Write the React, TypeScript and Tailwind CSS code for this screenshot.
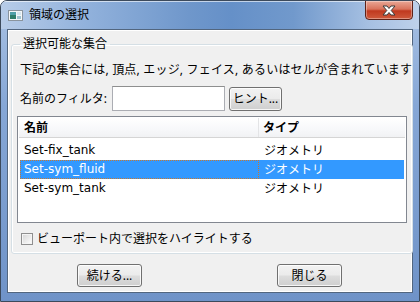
const FONT = { fontFamily: '"Noto Sans", "Noto Sans CJK JP", sans-serif' };
const LATIN = { fontFamily: '"DejaVu Sans", "Noto Sans CJK JP", sans-serif' };

const ROWS = [
  { name: 'Set-fix_tank', type: 'ジオメトリ' },
  { name: 'Set-sym_fluid', type: 'ジオメトリ' },
  { name: 'Set-sym_tank', type: 'ジオメトリ' },
];

function AppIcon() {
  return (
    <svg width="15" height="11" viewBox="0 0 15 11">
      <rect x="0.5" y="0.5" width="14" height="10" fill="#f4f6f8" stroke="#8a949e" />
      <rect x="2" y="2" width="6" height="7" fill="#2f7d6a" />
      <rect x="2" y="2" width="6" height="3" fill="#4f9fa8" />
      <rect x="9" y="2" width="4" height="3" fill="#d6e6ee" />
      <rect x="9" y="6" width="4" height="3" fill="#9fc3cf" />
    </svg>
  );
}

function CloseButton() {
  return (
    <div className="absolute right-[6px] top-[-1px] flex h-[20px] w-[48px] items-center justify-center rounded-b-[4px] border border-[#5e2218] bg-[linear-gradient(180deg,#e9a796_0%,#d8735c_45%,#c0391f_55%,#cf5a3c_100%)] shadow-[inset_0_0_0_1px_rgba(255,255,255,0.35)]">
      <svg width="14" height="11" viewBox="0 0 14 11">
        <path d="M1 1 H5 L7 3.5 L9 1 H13 L9.2 5.5 L13 10 H9 L7 7.5 L5 10 H1 L4.8 5.5 Z" fill="#ffffff" stroke="#3b3b3b" strokeWidth="1" strokeLinejoin="round" />
      </svg>
    </div>
  );
}

function WinButton({ label, className }: { label: string; className: string }) {
  return (
    <button
      className={`flex items-center justify-center rounded-[3px] border border-[#707070] bg-[linear-gradient(180deg,#f2f2f2_0%,#ebebeb_48%,#dddddd_52%,#cfcfcf_100%)] text-[12px] text-black shadow-[inset_0_0_0_1px_rgba(255,255,255,0.8)] ${className}`}
    >
      {label}
    </button>
  );
}

export default function App() {
  return (
    <div className="h-[302px] w-[420px] bg-white" style={FONT}>
      <div className="relative flex h-[302px] w-[420px] flex-col overflow-hidden rounded-t-[7px] border border-[#3c4a5c] bg-[linear-gradient(180deg,#a9c2e4_0%,#86a7d6_35%,#6f93c8_100%)] shadow-[inset_0_1px_0_rgba(255,255,255,0.7)]">
        <div className="flex h-[28px] items-center bg-[linear-gradient(90deg,#b7cce8_0%,#92b2dc_20%,#6f97cb_45%,#6590c8_55%,#7199cc_70%,#a6c0e2_88%,#bed1ea_100%)] pl-[7px] shadow-[inset_0_1px_0_rgba(255,255,255,0.6)]">
          <AppIcon />
          <span className="ml-[6px] text-[12px] text-black">領域の選択</span>
        </div>
        <CloseButton />

        <div className="mx-[6px] flex h-[264px] flex-col border border-[#52667f] bg-[#f0f0f0] shadow-[inset_0_0_0_1px_#ffffff]">
          <fieldset className="mx-[3px] mt-[6px] rounded-[3px] border border-[#d5dfe5] px-[5px] pb-[6px] shadow-[inset_0_0_0_1px_#ffffff]">
            <legend className="ml-[3px] px-[3px] text-[12px] leading-[16px] text-black">選択可能な集合</legend>

            <div className="-mr-[5px] mt-[10px] overflow-hidden whitespace-nowrap pl-[3px] text-[12px] leading-[16px] tracking-[0.2px] text-black">
              下記の集合には, 頂点, エッジ, フェイス, あるいはセルが含まれています
            </div>

            <div className="mt-[8px] flex h-[25px] items-center pl-[3px]">
              <span className="text-[12px] leading-[16px] text-black">名前のフィルタ:</span>
              <div className="ml-[5px] h-[25px] w-[113px] border border-[#abadb3] border-t-[#8e8f8f] bg-white" />
              <WinButton label="ヒント..." className="ml-[4px] h-[24px] w-[53px]" />
            </div>

            <div className="mt-[5px] flex h-[107px] flex-col border border-[#828790] bg-white p-[1px]">
              <div className="flex h-[20px] border-b border-[#d5d5d5] bg-[linear-gradient(180deg,#ffffff_0%,#f7f8fa_60%,#f1f2f4_100%)] text-[12px] font-bold leading-[16px] text-black">
                <div className="flex w-[240px] items-center border-r border-[#e3e4e6] pl-[5px]">名前</div>
                <div className="flex flex-1 items-center pl-[4px]">タイプ</div>
              </div>
              <div className="mt-[3px] flex flex-col">
                {ROWS.map((r, i) => {
                  const sel = i === 1;
                  return (
                    <div
                      key={r.name}
                      className={`mx-[1px] flex h-[19px] text-[12px] leading-[17px] ${sel ? 'bg-[#3399ff] text-white' : 'text-black'}`}
                    >
                      <div
                        className={`w-[239px] border pl-[3px] ${sel ? 'border-dotted border-[#c9782e]' : 'border-transparent'}`}
                        style={LATIN}
                      >
                        {r.name}
                      </div>
                      <div className="flex-1 border border-transparent pl-[4px]">{r.type}</div>
                    </div>
                  );
                })}
              </div>
            </div>

            <div className="mt-[8px] flex h-[16px] items-center pl-[4px]">
              <div className="h-[12px] w-[12px] border border-[#8f8f8f] bg-[linear-gradient(135deg,#d4d4d4_0%,#f2f2f2_70%,#ffffff_100%)] shadow-[inset_0_0_0_1px_#f4f4f4]" />
              <span className="ml-[4px] text-[12px] leading-[16px] text-black">ビューポート内で選択をハイライトする</span>
            </div>
          </fieldset>

          <div className="mt-[10px] flex gap-[135px] pl-[69px]">
            <WinButton label="続ける..." className="h-[23px] w-[65px]" />
            <WinButton label="閉じる" className="h-[23px] w-[65px]" />
          </div>
        </div>
      </div>
    </div>
  );
}
